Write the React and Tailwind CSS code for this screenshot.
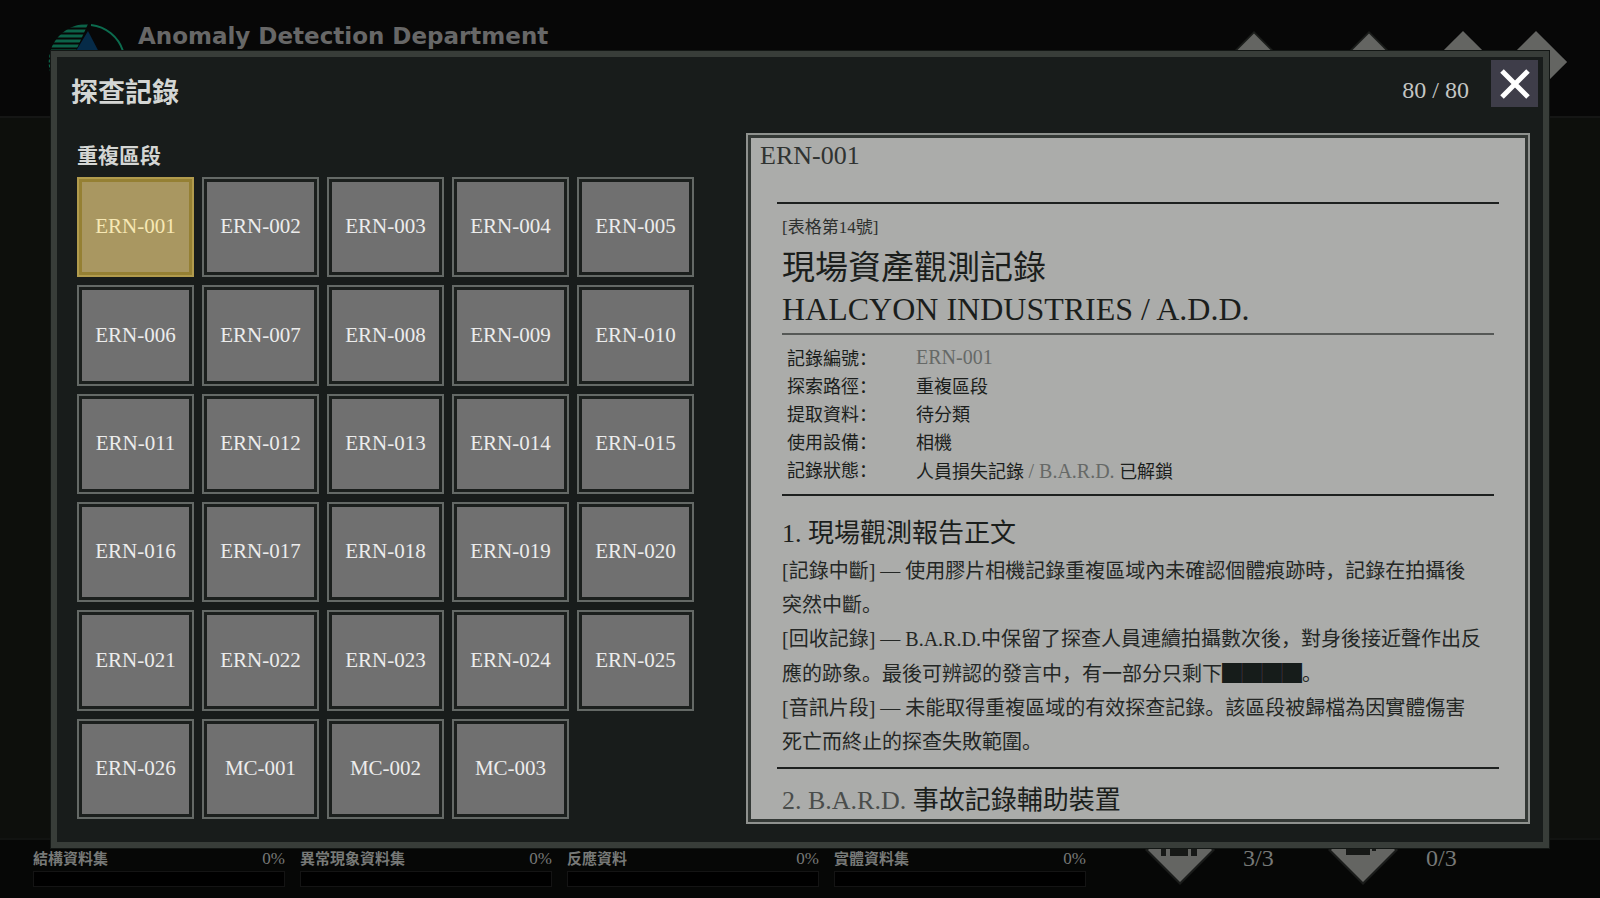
import React from 'react';
import clsx from 'clsx';

const records = [
    ...Array.from({ length: 26 }, (_, i) => `ERN-${String(i + 1).padStart(3, '0')}`),
    'MC-001',
    'MC-002',
    'MC-003',
];

const datasets = [
    { name: '結構資料集', value: 0 },
    { name: '異常現象資料集', value: 0 },
    { name: '反應資料', value: 0 },
    { name: '實體資料集', value: 0 },
];

const details = [
    { label: '記錄編號', value: 'ERN-001', muted: true },
    { label: '探索路徑', value: '重複區段' },
    { label: '提取資料', value: '待分類' },
    { label: '使用設備', value: '相機' },
];

function Logo() {
    return (
        <svg viewBox="0 0 80 80" className="h-20 w-20 shrink-0" fill="none" aria-hidden="true">
            <defs>
                <clipPath id="logo-left">
                    <path d="M40 2A38 38 0 0 0 11 66Z" />
                </clipPath>
            </defs>
            <g clipPath="url(#logo-left)" stroke="#0c6248" strokeWidth="3">
                <path d="M0 4h80M0 9h80M0 14h80M0 19h80M0 24h80M0 29h80M0 34h80M0 39h80M0 44h80M0 49h80M0 54h80M0 59h80" />
            </g>
            <path d="M43 3A38 38 0 0 1 75 29" stroke="#0c6b4e" strokeWidth="2" />
            <path d="M40 9L53 34H25Z" fill="#062b48" />
        </svg>
    );
}

function Diamond({ className, outlined, children }) {
    return (
        <svg viewBox="0 0 72 72" className={className} aria-hidden="true">
            <path d="M36 1L71 36L36 71L1 36Z" fill={outlined ? '#1a1c1a' : '#646562'} />
            {outlined && <path d="M36 4L68 36L36 68L4 36Z" fill="#646562" />}
            {children}
        </svg>
    );
}

function Header() {
    return (
        <header className="flex h-[118px] items-start justify-between border-b-2 border-[#151615] bg-[#070707] pr-8 pl-12">
            <div className="flex items-start gap-2.5 pt-[22px]">
                <Logo />
                <h1 className="font-['DejaVu_Sans'] text-[23px] leading-7 font-bold text-[#676767]">
                    Anomaly Detection Department
                </h1>
            </div>
            <div className="flex items-start pt-[30px]">
                <Diamond outlined className="mr-[51px] h-16 w-16" />
                <Diamond outlined className="mr-[30px] h-16 w-16" />
                <Diamond className="mr-[9px] h-16 w-16" />
                <Diamond className="h-16 w-16" />
            </div>
        </header>
    );
}

function Footer() {
    return (
        <footer className="flex h-[60px] items-start border-t-2 border-[#111311] bg-[#060706] pl-[33px] text-[#777977]">
            <div className="grid grid-cols-[repeat(4,252px)] gap-[15px] pt-[7px]">
                {datasets.map((set) => (
                    <div key={set.name}>
                        <div className="flex h-6 items-center justify-between">
                            <span className="text-[15px] font-bold">{set.name}</span>
                            <span className="text-[17px]">{set.value}%</span>
                        </div>
                        <div className="h-4 border border-[#141414] bg-black">
                            <div className="h-full bg-[#676767]" style={{ width: `${set.value}%` }} />
                        </div>
                    </div>
                ))}
            </div>
            <div className="-mt-[26px] ml-[58px] flex items-start">
                <Diamond outlined className="h-[72px] w-[72px]">
                    <path d="M17 32h5v10h-5zM26 32h18v10H26zM47 32h6v10h-6z" fill="#171917" />
                </Diamond>
                <span className="mt-7 ml-[27px] w-14 text-2xl">3/3</span>
                <Diamond outlined className="ml-[28px] h-[72px] w-[72px]">
                    <path d="M19 32h24v9H19zM45 32h4v5h-4z" fill="#171917" />
                </Diamond>
                <span className="mt-7 ml-[27px] text-2xl">0/3</span>
            </div>
        </footer>
    );
}

function RecordTile({ name, selected }) {
    return (
        <button
            type="button"
            aria-pressed={selected}
            className={clsx(
                'flex border-2 p-[3px] text-[21px]',
                selected
                    ? 'border-[#b19b4d] bg-[#958033] text-[#f7e8b4]'
                    : 'border-[#646966] bg-[#1b1f1d] text-[#ececec]'
            )}
        >
            <span
                className={clsx(
                    'flex h-full w-full items-center justify-center',
                    selected ? 'bg-[#a99761]' : 'bg-[#707070]'
                )}
            >
                {name}
            </span>
        </button>
    );
}

function RecordList() {
    return (
        <section className="flex w-[617px] shrink-0 flex-col">
            <h3 className="mb-1 h-[34px] text-[21px] leading-[34px] font-bold text-[#d4d6d4]">重複區段</h3>
            <div className="grid flex-1 grid-cols-5 grid-rows-6 gap-2">
                {records.map((name) => (
                    <RecordTile key={name} name={name} selected={name === 'ERN-001'} />
                ))}
            </div>
        </section>
    );
}

function Document() {
    return (
        <article className="flex min-w-0 flex-1 border-2 border-[#8e918e] bg-[#343936] p-[3px]">
            <div className="w-full overflow-hidden bg-[#abacaa] text-[#1b1e1c]">
                <h3 className="px-[9px] pt-0.5 text-[26px] leading-8 text-[#303331]">ERN-001</h3>
                <div className="mt-[30px] px-[26px]">
                    <div className="border-t-2 border-[#1d201f] px-[5px]">
                        <p className="mt-3 text-[17px] leading-6 text-[#2d302e]">[表格第14號]</p>
                        <h4 className="mt-2 border-b-2 border-[#555856] pb-[3px] text-[33px] leading-[41px]">
                            現場資產觀測記錄
                            <span className="block text-[32px]">HALCYON INDUSTRIES / A.D.D.</span>
                        </h4>
                        <dl className="grid grid-cols-[129px_1fr] border-b-2 border-[#1d201f] px-[5px] pt-2.5 pb-2 text-lg leading-7">
                            {details.map((row) => (
                                <React.Fragment key={row.label}>
                                    <dt>{row.label}：</dt>
                                    <dd className={clsx(row.muted && 'text-xl leading-6 text-[#666967]')}>
                                        {row.value}
                                    </dd>
                                </React.Fragment>
                            ))}
                            <dt>記錄狀態：</dt>
                            <dd>
                                人員損失記錄 <span className="text-xl leading-7 text-[#666967]">/ B.A.R.D.</span> 已解鎖
                            </dd>
                        </dl>
                        <h4 className="mt-[18px] text-[26px] leading-10">1. 現場觀測報告正文</h4>
                        <div className="pr-2.5 text-xl leading-[34px] text-[#242725]">
                            <p>[記錄中斷] — 使用膠片相機記錄重複區域內未確認個體痕跡時，記錄在拍攝後突然中斷。</p>
                            <p>
                                [回收記錄] — B.A.R.D.中保留了探查人員連續拍攝數次後，對身後接近聲作出反應的跡象。最後可辨認的發言中，有一部分只剩下<span className="font-['Noto_Sans_CJK_SC'] text-[#161c1a]">████</span>。
                            </p>
                            <p>[音訊片段] — 未能取得重複區域的有效探查記錄。該區段被歸檔為因實體傷害死亡而終止的探查失敗範圍。</p>
                        </div>
                    </div>
                    <div className="mt-2 border-t-2 border-[#1d201f] px-[5px] pt-3">
                        <h4 className="text-[26px] leading-10">
                            <span className="text-[#4a4d4b]">2. B.A.R.D.</span> 事故記錄輔助裝置
                        </h4>
                    </div>
                </div>
            </div>
        </article>
    );
}

function CloseButton() {
    return (
        <button
            type="button"
            aria-label="關閉"
            className="flex h-[47px] w-[47px] items-center justify-center bg-[#3e3d49] text-white"
        >
            <svg viewBox="0 0 30 30" className="h-[30px] w-[30px]" fill="none" aria-hidden="true">
                <path d="M2 2L28 28M28 2L2 28" stroke="currentColor" strokeWidth="5" />
            </svg>
        </button>
    );
}

export default function App() {
    return (
        <div className="relative flex h-screen flex-col overflow-hidden bg-[#0d0f0c] font-['Liberation_Serif','Noto_Sans_CJK_SC',serif]">
            <Header />
            <main className="flex-1" />
            <Footer />
            <div className="absolute inset-0 px-[50px] pt-[50px] pb-[49px]">
                <div
                    role="dialog"
                    aria-labelledby="records-title"
                    className="flex h-full flex-col border border-[#131715] bg-[#181c1b]"
                >
                    <div className="flex min-h-0 flex-1 flex-col border-6 border-[#383d39] pr-[13px] pb-[18px] pl-[20px]">
                        <div className="flex items-start justify-between">
                            <h2
                                id="records-title"
                                className="-ml-1.5 pt-4 text-[27px] leading-10 font-bold text-[#d4d6d4]"
                            >
                                探查記錄
                            </h2>
                            <div className="-mr-2 flex gap-[22px] pt-[3px]">
                                <span className="pt-2.5 text-2xl leading-10 text-[#c4c6c4]">80 / 80</span>
                                <CloseButton />
                            </div>
                        </div>
                        <div className="mt-5 flex min-h-0 flex-1">
                            <div className="flex pt-[6px] pb-[5px]">
                                <RecordList />
                            </div>
                            <div className="ml-[52px] flex min-w-0 flex-1">
                                <Document />
                            </div>
                        </div>
                    </div>
                </div>
            </div>
        </div>
    );
}
